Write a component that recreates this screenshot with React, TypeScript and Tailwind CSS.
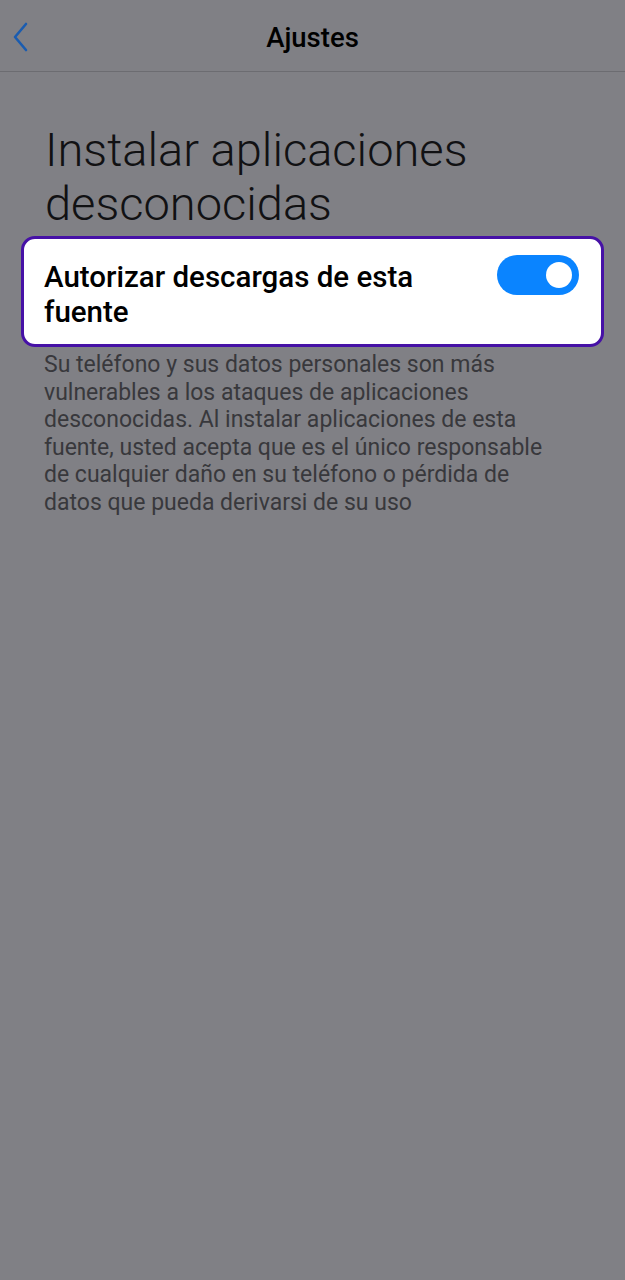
import { useState } from 'react';

export default function App() {
  const [autorizado, setAutorizado] = useState(true);

  return (
    <div
      className="min-h-[1280px] w-full bg-[#808085] text-black"
      style={{ fontFamily: 'Roboto, "Noto Sans", sans-serif' }}
    >
      {/* Header */}
      <div className="relative flex h-[72px] items-center justify-center border-b border-[#6c6c71] pt-[4px]">
        <button className="absolute left-[8px] top-[19px] flex h-[36px] w-[24px] items-center justify-center">
          <svg width="18" height="30" viewBox="0 0 18 30" fill="none">
            <path d="M15 2 L4 15 L15 28" stroke="#1a5cb0" strokeWidth="2.6" strokeLinecap="round" strokeLinejoin="round" />
          </svg>
        </button>
        <h1 className="text-[27.5px] font-medium">Ajustes</h1>
      </div>

      {/* Titulo */}
      <h2 className="mt-[51px] px-[45px] text-[47px] font-light leading-[54px] text-[#111113]">
        Instalar aplicaciones desconocidas
      </h2>

      {/* Tarjeta */}
      <div className="mx-[21px] mt-[5px] flex items-start justify-between rounded-[14px] border-[3px] border-[#4611a6] bg-white pb-[14px] pl-[20px] pr-[22px] pt-[21px]">
        <p className="w-[420px] text-[29.5px] font-medium leading-[35px]">
          Autorizar descargas de esta fuente
        </p>
        <button
          onClick={() => setAutorizado((v) => !v)}
          className={`mt-[-5px] flex h-[40px] w-[82px] shrink-0 items-center rounded-full px-[7px] ${
            autorizado ? 'justify-end bg-[#0a84ff]' : 'justify-start bg-gray-300'
          }`}
        >
          <span className="h-[26px] w-[26px] rounded-full bg-white" />
        </button>
      </div>

      {/* Descripcion */}
      <p className="ml-[44px] mt-[4px] w-[515px] text-[23px] leading-[27.5px] text-[#38383c]">
        Su teléfono y sus datos personales son más vulnerables a los ataques de aplicaciones
        desconocidas. Al instalar aplicaciones de esta fuente, usted acepta que es el único
        responsable de cualquier daño en su teléfono o pérdida de datos que pueda derivarsi de su
        uso
      </p>
    </div>
  );
}
